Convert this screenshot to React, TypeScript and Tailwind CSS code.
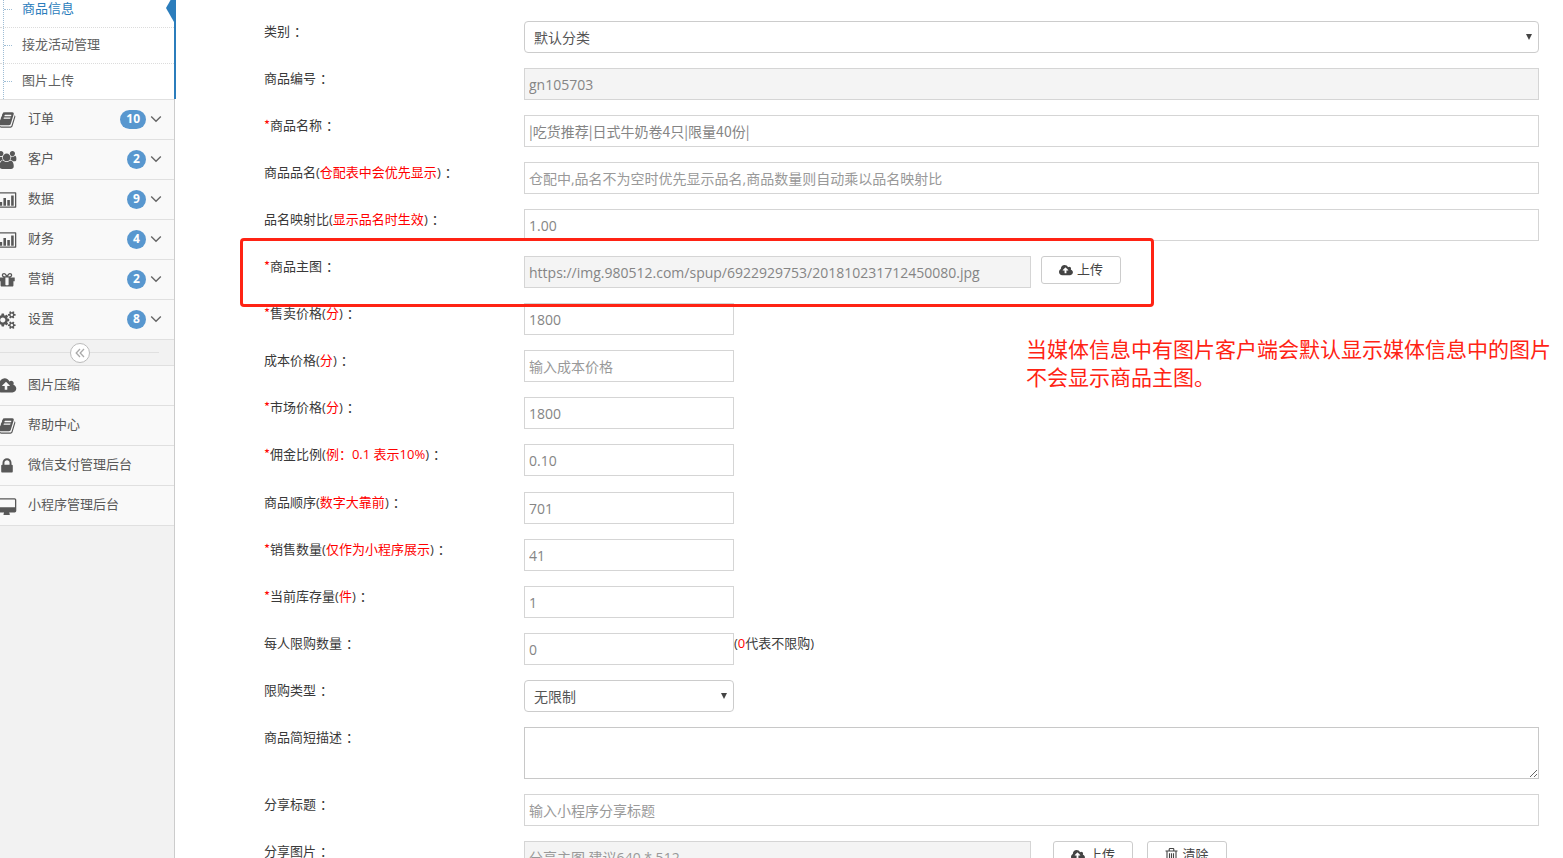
import type { ReactNode } from 'react';

function Icon({ d, box = 1792, size = 'h-[18px]' }: { d: string; box?: number; size?: string }) {
  return (
    <svg viewBox={`0 0 ${box} 1792`} className={`${size} w-auto shrink-0 fill-current`} aria-hidden="true">
      <path d={d} />
    </svg>
  );
}

const BOOK =
  'M1703 478q40 57 18 129l-275 906q-19 64-76.5 107.5t-122.5 43.5h-923q-77 0-148.5-53.5t-99.5-131.5q-24-67-2-127 0-4 3-27t4-37q1-8-3-21.5t-3-19.5q2-11 8-21t16.5-23.5 16.5-23.5q23-38 45-91.5t30-91.5q3-10 .5-30t-.5-28q3-11 17-28t17-23q21-36 42-92t25-90q1-9-2.5-32t.5-28q4-13 22-30.5t22-22.5q19-26 42.5-84.5t27.5-96.5q1-8-3-25.5t-2-26.5q2-8 9-18t18-23 17-21q8-12 16.5-30.5t15-35 16-36 19.5-32 26.5-23.5 36-11.5 47.5 5.5l-1 3q38-9 51-9h761q74 0 114 56t18 130l-274 906q-36 119-71.5 153.5t-128.5 34.5h-869q-27 0-38 15-11 16-1 43 24 70 144 70h923q29 0 56-15.5t35-41.5l300-987q7-22 5-57 38 15 59 43zm-1064 2q-4 13 2 22.5t20 9.5h608q13 0 25.5-9.5t16.5-22.5l21-64q4-13-2-22.5t-20-9.5h-608q-13 0-25.5 9.5t-16.5 22.5zm-83 256q-4 13 2 22.5t20 9.5h608q13 0 25.5-9.5t16.5-22.5l21-64q4-13-2-22.5t-20-9.5h-608q-13 0-25.5 9.5t-16.5 22.5z';
const USERS =
  'M593 896q-162 5-265 128h-134q-82 0-138-40.5t-56-118.5q0-353 124-353 6 0 43.5 21t97.5 42.5 119 21.5q67 0 133-23-5 37-5 66 0 159 93 293zm1071 637q0 120-73 189.5t-194 69.5h-874q-121 0-194-69.5t-73-189.5q0-53 3.5-103.5t14-109 26.5-108.5 43-97.5 62-81 85.5-53.5 111.5-20q10 0 43 21.5t73 48 107 48 135 21.5 135-21.5 107-48 73-48 43-21.5q61 0 111.5 20t85.5 53.5 62 81 43 97.5 26.5 108.5 14 109 3.5 103.5zm-1024-1277q0 106-75 181t-181 75-181-75-75-181 75-181 181-75 181 75 75 181zm704 384q0 159-112.5 271.5t-271.5 112.5-271.5-112.5-112.5-271.5 112.5-271.5 271.5-112.5 271.5 112.5 112.5 271.5zm576 225q0 78-56 118.5t-138 40.5h-134q-103-123-265-128 93-134 93-293 0-29-5-66 66 23 133 23 59 0 119-21.5t97.5-42.5 43.5-21q124 0 124 353zm-128-609q0 106-75 181t-181 75-181-75-75-181 75-181 181-75 181 75 75 181z';
const CHART =
  'M0 196q0-68 68-68h1784q68 0 68 68v1400q0 68-68 68h-1784q-68 0-68-68zM128 256v1280h1664v-1280zM256 1088h256v384h-256zM640 704h256v768h-256zM1024 896h256v576h-256zM1408 448h256v1024h-256z';
const GIFT =
  'M1056 1356v-716h-320v716q0 25 18 38.5t46 13.5h192q28 0 46-13.5t18-38.5zm-456-844h195l-126-161q-26-31-69-31-40 0-68 28t-28 68 28 68 68 28zm688-96q0-40-28-68t-68-28q-43 0-69 31l-125 161h194q40 0 68-28t28-68zm376 256v320q0 14-9 23t-23 9h-96v416q0 40-28 68t-68 28h-1088q-40 0-68-28t-28-68v-416h-96q-14 0-23-9t-9-23v-320q0-14 9-23t23-9h440q-93 0-158.5-65.5t-65.5-158.5 65.5-158.5 158.5-65.5q107 0 168 77l128 165 128-165q61-77 168-77 93 0 158.5 65.5t65.5 158.5-65.5 158.5-158.5 65.5h440q14 0 23 9t9 23z';
const GEARS =
  'M832 896q0-106-75-181t-181-75-181 75-75 181 75 181 181 75 181-75 75-181zm768 512q0-52-38-90t-90-38-90 38-38 90q0 53 37.5 90.5t90.5 37.5 90.5-37.5 37.5-90.5zm0-1024q0-52-38-90t-90-38-90 38-38 90q0 53 37.5 90.5t90.5 37.5 90.5-37.5 37.5-90.5zm-384 421v185q0 10-7 19.5t-16 10.5l-155 24q-11 35-32 76 34 48 90 115 7 11 7 20 0 12-7 19-23 30-82.5 89.5t-78.5 59.5q-11 0-21-7l-115-90q-37 19-77 31-11 108-23 155-7 24-30 24h-186q-11 0-20-7.5t-10-17.5l-23-153q-34-10-75-31l-118 89q-7 7-20 7-11 0-21-8-144-133-144-160 0-9 7-19 10-14 41-53t47-61q-23-44-35-82l-152-24q-10-1-17-9.5t-7-19.5v-185q0-10 7-19.5t16-10.5l155-24q11-35 32-76-34-48-90-115-7-11-7-20 0-12 7-20 22-30 82-89t79-59q11 0 21 7l115 90q34-18 77-32 11-108 23-154 7-24 30-24h186q11 0 20 7.5t10 17.5l23 153q34 10 75 31l118-89q8-7 20-7 11 0 21 8 144 133 144 160 0 8-7 19-12 16-42 54t-45 60q23 48 34 82l152 23q10 2 17 10.5t7 19.5zm640 533v140q0 16-149 31-12 27-30 52 51 113 51 138 0 4-4 7-122 71-124 71-8 0-46-47t-52-68q-20 2-30 2t-30-2q-14 21-52 68t-46 47q-2 0-124-71-4-3-4-7 0-25 51-138-18-25-30-52-149-15-149-31v-140q0-16 149-31 13-29 30-52-51-113-51-138 0-4 4-7 4-2 35-20t59-34 30-16q8 0 46 46.5t52 67.5q20-2 30-2t30 2q51-71 92-112l6-2q4 0 124 70 4 3 4 7 0 25-51 138 17 23 30 52 149 15 149 31zm0-1024v140q0 16-149 31-12 27-30 52 51 113 51 138 0 4-4 7-122 71-124 71-8 0-46-47t-52-68q-20 2-30 2t-30-2q-14 21-52 68t-46 47q-2 0-124-71-4-3-4-7 0-25 51-138-18-25-30-52-149-15-149-31v-140q0-16 149-31 13-29 30-52-51-113-51-138 0-4 4-7 4-2 35-20t59-34 30-16q8 0 46 46.5t52 67.5q20-2 30-2t30 2q51-71 92-112l6-2q4 0 124 70 4 3 4 7 0 25-51 138 17 23 30 52 149 15 149 31z';
const CLOUD =
  'M1280 864q0-14-9-23l-352-352q-9-9-23-9t-23 9l-351 351q-10 12-10 24 0 14 9 23t23 9h224v352q0 13 9.5 22.5t22.5 9.5h192q13 0 22.5-9.5t9.5-22.5v-352h224q13 0 22.5-9.5t9.5-22.5zm640 288q0 159-112.5 271.5t-271.5 112.5h-1088q-185 0-316.5-131.5t-131.5-316.5q0-130 70-240t188-165q-2-30-2-43 0-212 150-362t362-150q156 0 285.5 87t188.5 231q71-62 166-62 106 0 181 75t75 181q0 76-41 138 130 31 213.5 135.5t83.5 238.5z';
const LOCK =
  'M640 768h512v-192q0-106-75-181t-181-75-181 75-75 181v192zm832 96v576q0 40-28 68t-68 28h-960q-40 0-68-28t-28-68v-576q0-40 28-68t68-28h32v-192q0-184 132-316t316-132 316 132 132 316v192h32q40 0 68 28t28 68z';
const DESKTOP =
  'M1792 992v-704q0-32-32-32h-1600q-32 0-32 32v704q0 32 32 32h1600q32 0 32-32zM1920 288v1088q0 66-47 113t-113 47h-544q0 60 32 110t32 82-32 64h-576q-32-32-32-64t32-82 32-110h-544q-66 0-113-47t-47-113v-1088q0-66 47-113t113-47h1600q66 0 113 47t47 113z';

const MENU = [
  { text: '订单', d: BOOK, box: 1792, count: 10 },
  { text: '客户', d: USERS, box: 1920, count: 2 },
  { text: '数据', d: CHART, box: 1920, count: 9 },
  { text: '财务', d: CHART, box: 1920, count: 4 },
  { text: '营销', d: GIFT, box: 1792, count: 2 },
  { text: '设置', d: GEARS, box: 1920, count: 8 },
];

const LINKS = [
  { text: '图片压缩', d: CLOUD, box: 1920 },
  { text: '帮助中心', d: BOOK, box: 1792 },
  { text: '微信支付管理后台', d: LOCK, box: 1792 },
  { text: '小程序管理后台', d: DESKTOP, box: 1920 },
];

function MenuItem({ text, d, box, count }: { text: string; d: string; box: number; count?: number }) {
  return (
    <li className="h-10 border-b border-[#e0e0e0] bg-[#f9f9f9]">
      <a href="#" className="flex h-full items-center pr-3 pb-px text-[#585858]">
        <span className="-ml-2 mr-1.5 flex w-[30px] shrink-0 justify-center pt-0.5">
          <Icon d={d} box={box} />
        </span>
        <span className="grow">{text}</span>
        {count !== undefined && (
          <>
            <span className="h-[19px] min-w-[19px] rounded-full bg-[#5897cf] px-1.5 text-center text-xs leading-[18px] font-bold text-white">
              {count}
            </span>
            <svg viewBox="0 0 12 8" className="ml-1 h-2 w-3" fill="none" stroke="#666" strokeWidth="1.4" aria-hidden="true">
              <path d="M1.2 1.4 6 6.2l4.8-4.8" />
            </svg>
          </>
        )}
      </a>
    </li>
  );
}

function Sidebar() {
  const subs = ['商品信息', '接龙活动管理', '图片上传'];
  return (
    <nav className="w-[175px] shrink-0 border-r border-[#ccc] bg-[#f2f2f2] text-[13px]">
      <ul className="relative -mt-2 bg-white">
        {subs.map((s, i) => (
          <li
            key={s}
            className={
              i === 2 ? 'h-9 border-b border-[#e0e0e0]' : 'h-9 border-b border-dotted border-[#dcdcdc]'
            }
          >
            <a
              href="#"
              className={
                i === 0
                  ? 'ml-[3px] flex h-full items-center border-l border-dotted border-[#9dbdd6] pb-px text-[#2b7dbc]'
                  : 'ml-[3px] flex h-full items-center border-l border-dotted border-[#9dbdd6] pb-px text-[#616161]'
              }
            >
              <span className="mr-2.5 w-2 border-t border-dotted border-[#9dbdd6]" />
              {s}
            </a>
          </li>
        ))}
        <li className="absolute -right-0.5 top-0 bottom-px w-0.5 bg-[#2b7dbc]" aria-hidden="true" />
        <li className="absolute right-0 top-0.5" aria-hidden="true">
          <svg viewBox="0 0 8 28" className="h-7 w-2 fill-[#2b7dbc]">
            <path d="M8 0v28L0 14z" />
          </svg>
        </li>
      </ul>
      <ul>
        {MENU.map((m) => (
          <MenuItem key={m.text} {...m} />
        ))}
      </ul>
      <div className="flex h-[26px] items-center border-b border-[#e0e0e0] pr-[15px]">
        <span className="h-px grow bg-[#e0e0e0]" />
        <button
          type="button"
          aria-label="«"
          className="flex size-5 items-center justify-center rounded-full border border-[#bbb] bg-white text-[#aaa]"
        >
          <svg viewBox="0 0 10 10" className="size-2.5" fill="none" stroke="currentColor" strokeWidth="1.3" aria-hidden="true">
            <path d="M5 1 1.2 5 5 9M9 1 5.2 5 9 9" />
          </svg>
        </button>
        <span className="h-px grow bg-[#e0e0e0]" />
      </div>
      <ul>
        {LINKS.map((m) => (
          <MenuItem key={m.text} {...m} />
        ))}
      </ul>
    </nav>
  );
}

const CONTROL = 'h-8 border border-[#d5d5d5] px-1 text-sm text-[#858585] placeholder:text-[#999] outline-none';

function Row({
  id,
  label,
  note,
  required,
  children,
}: {
  id: string;
  label: string;
  note?: string;
  required?: boolean;
  children: ReactNode;
}) {
  return (
    <div className="relative flex items-start">
      <label htmlFor={id} className="w-[260px] shrink-0 leading-5">
        {required && <span className="font-['Noto_Sans_CJK_SC',sans-serif] text-[#f00]">*</span>}
        {label}
        {note && (
          <>
            (<span className="text-[#f00]">{note}</span>)
          </>
        )}
        <span className="pl-1">：</span>
      </label>
      <div className="flex min-w-0 grow items-start">{children}</div>
    </div>
  );
}

function Field({ id, value, hint, readOnly, size }: { id: string; value?: string; hint?: string; readOnly?: boolean; size: 'full' | 'half' | 'short' }) {
  const width = size === 'full' ? 'w-full' : size === 'half' ? 'w-1/2 max-w-[507px]' : 'w-[210px]';
  return (
    <input
      id={id}
      type="text"
      defaultValue={value}
      placeholder={hint}
      readOnly={readOnly}
      className={`${CONTROL} ${width} ${readOnly ? 'bg-[#f4f4f4]' : 'bg-white'}`}
    />
  );
}

function Picker({ id, option, wide }: { id: string; option: string; wide?: boolean }) {
  return (
    <div className={wide ? 'relative w-full' : 'relative w-[210px]'}>
      <select
        id={id}
        className="h-8 w-full appearance-none rounded border border-[#ccc] bg-white px-[9px] pt-0.5 text-sm text-[#555] outline-none"
      >
        <option>{option}</option>
      </select>
      <svg viewBox="0 0 6 6" className="pointer-events-none absolute right-[7px] top-[13px] size-1.5 fill-[#444]" aria-hidden="true">
        <path d="M0 0h6L3 6z" />
      </svg>
    </div>
  );
}

const BUTTON = 'flex h-7 w-20 shrink-0 items-center justify-center gap-1 rounded-[3px] border border-[#ccc] bg-white text-[13px] text-[#444]';

export default function App() {
  return (
    <div className="flex h-screen overflow-hidden bg-white font-['Open_Sans','Noto_Sans_CJK_SC',sans-serif] text-[13px] text-[#393939]">
      <Sidebar />
      <main className="min-w-0 grow pt-[21px] pr-6 pl-[89px]">
        <form className="flex flex-col gap-4">
          <div className="flex flex-col gap-[15px]">
            <Row id="category" label="类别">
              <Picker id="category" option="默认分类" wide />
            </Row>
            <Row id="code" label="商品编号">
              <Field id="code" value="gn105703" readOnly size="full" />
            </Row>
            <Row id="name" label="商品名称" required>
              <input
                id="name"
                type="text"
                defaultValue="|吃货推荐|日式牛奶卷4只|限量40份|"
                className={`${CONTROL} w-full bg-white font-['Noto_Sans_CJK_SC',sans-serif]`}
              />
            </Row>
            <Row id="alias" label="商品品名" note="仓配表中会优先显示">
              <Field id="alias" hint="仓配中,品名不为空时优先显示品名,商品数量则自动乘以品名映射比" size="full" />
            </Row>
            <Row id="ratio" label="品名映射比" note="显示品名时生效">
              <Field id="ratio" value="1.00" size="full" />
            </Row>
            <Row id="image" label="商品主图" required>
              <Field id="image" value="https://img.980512.com/spup/6922929753/201810231712450080.jpg" readOnly size="half" />
              <button type="button" className={`${BUTTON} ml-2.5`}>
                <Icon d={CLOUD} box={1920} size="h-[13px]" />
                上传
              </button>
              <div className="pointer-events-none absolute -top-[18px] -left-6 z-10 h-[69px] w-[914px] rounded border-3 border-[#ff2314]" />
              <p className="absolute top-[79px] left-[762px] z-10 text-[21px] leading-7 whitespace-nowrap text-[#ff2314]">
                当媒体信息中有图片客户端会默认显示媒体信息中的图片
                <br />
                不会显示商品主图。
              </p>
            </Row>
            <Row id="price" label="售卖价格" note="分" required>
              <Field id="price" value="1800" size="short" />
            </Row>
            <Row id="cost" label="成本价格" note="分">
              <Field id="cost" hint="输入成本价格" size="short" />
            </Row>
            <Row id="market" label="市场价格" note="分" required>
              <Field id="market" value="1800" size="short" />
            </Row>
            <Row id="rate" label="佣金比例" note="例：0.1 表示10%" required>
              <Field id="rate" value="0.10" size="short" />
            </Row>
          </div>
          <div className="flex flex-col gap-[15px]">
            <Row id="order" label="商品顺序" note="数字大靠前">
              <Field id="order" value="701" size="short" />
            </Row>
            <Row id="sold" label="销售数量" note="仅作为小程序展示" required>
              <Field id="sold" value="41" size="short" />
            </Row>
            <Row id="stock" label="当前库存量" note="件" required>
              <Field id="stock" value="1" size="short" />
            </Row>
            <Row id="limit" label="每人限购数量">
              <Field id="limit" value="0" size="short" />
              <span className="leading-5">
                (<span className="text-[#f00]">0</span>代表不限购)
              </span>
            </Row>
            <Row id="limit-type" label="限购类型">
              <Picker id="limit-type" option="无限制" />
            </Row>
            <Row id="summary" label="商品简短描述">
              <textarea
                id="summary"
                className="block h-[52px] w-full resize border border-[#c8c8c8] bg-white px-1 py-1 text-sm text-[#858585] outline-none"
              />
            </Row>
            <Row id="share-title" label="分享标题">
              <Field id="share-title" hint="输入小程序分享标题" size="full" />
            </Row>
            <Row id="share-image" label="分享图片">
              <Field id="share-image" hint="分享主图,建议640 * 512" readOnly size="half" />
              <button type="button" className={`${BUTTON} ml-[22px]`}>
                <Icon d={CLOUD} box={1920} size="h-[13px]" />
                上传
              </button>
              <button type="button" className={`${BUTTON} ml-3.5`}>
                <svg viewBox="0 0 13 14" className="h-3.5 w-[13px]" fill="none" stroke="currentColor" strokeWidth="1.1" aria-hidden="true">
                  <path d="M.5 3h12M4.2 3V1.3c0-.4.3-.8.8-.8h3c.5 0 .8.4.8.8V3M2 3v9.3c0 .7.5 1.2 1.2 1.2h6.6c.7 0 1.2-.5 1.2-1.2V3M4.5 5.2v6M6.5 5.2v6M8.5 5.2v6" />
                </svg>
                清除
              </button>
            </Row>
          </div>
        </form>
      </main>
    </div>
  );
}
